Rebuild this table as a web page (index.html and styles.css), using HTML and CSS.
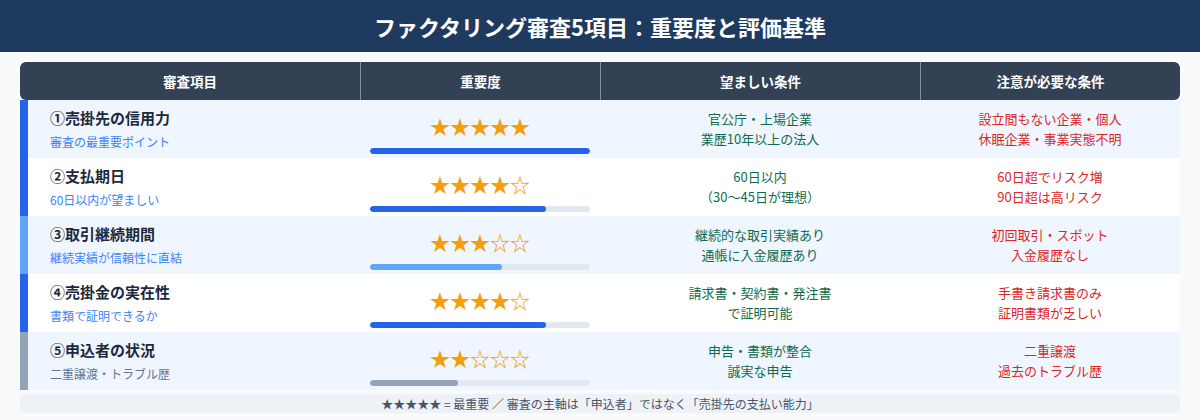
FILE: index.html
```html
<!DOCTYPE html>
<html lang="ja">
<head>
<meta charset="utf-8">
<link rel="stylesheet" href="styles.css">
</head>
<body>
<header class="titlebar"><h1>ファクタリング審査5項目：重要度と評価基準</h1></header>
<main class="wrap">
  <div class="thead">
    <div class="th">審査項目</div>
    <div class="th">重要度</div>
    <div class="th">望ましい条件</div>
    <div class="th">注意が必要な条件</div>
  </div>

  <div class="row alt">
    <div class="item bar-strong"><div class="name">①売掛先の信用力</div><div class="sub">審査の最重要ポイント</div></div>
    <div class="rank"><div class="stars">★★★★★</div><div class="track"><div class="fill strong" style="width:100%"></div></div></div>
    <div class="good">官公庁・上場企業<br>業歴10年以上の法人</div>
    <div class="bad">設立間もない企業・個人<br>休眠企業・事業実態不明</div>
  </div>

  <div class="row">
    <div class="item bar-strong"><div class="name">②支払期日</div><div class="sub">60日以内が望ましい</div></div>
    <div class="rank"><div class="stars">★★★★☆</div><div class="track"><div class="fill strong" style="width:80%"></div></div></div>
    <div class="good">60日以内<br>（30〜45日が理想）</div>
    <div class="bad">60日超でリスク増<br>90日超は高リスク</div>
  </div>

  <div class="row alt">
    <div class="item bar-mid"><div class="name">③取引継続期間</div><div class="sub">継続実績が信頼性に直結</div></div>
    <div class="rank"><div class="stars">★★★☆☆</div><div class="track"><div class="fill mid" style="width:60%"></div></div></div>
    <div class="good">継続的な取引実績あり<br>通帳に入金履歴あり</div>
    <div class="bad">初回取引・スポット<br>入金履歴なし</div>
  </div>

  <div class="row">
    <div class="item bar-strong"><div class="name">④売掛金の実在性</div><div class="sub">書類で証明できるか</div></div>
    <div class="rank"><div class="stars">★★★★☆</div><div class="track"><div class="fill strong" style="width:80%"></div></div></div>
    <div class="good">請求書・契約書・発注書<br>で証明可能</div>
    <div class="bad">手書き請求書のみ<br>証明書類が乏しい</div>
  </div>

  <div class="row alt">
    <div class="item bar-low"><div class="name">⑤申込者の状況</div><div class="sub gray">二重譲渡・トラブル歴</div></div>
    <div class="rank"><div class="stars">★★☆☆☆</div><div class="track"><div class="fill low" style="width:40%"></div></div></div>
    <div class="good">申告・書類が整合<br>誠実な申告</div>
    <div class="bad">二重譲渡<br>過去のトラブル歴</div>
  </div>

  <div class="note">★★★★★ = 最重要 ／ 審査の主軸は「申込者」ではなく「売掛先の支払い能力」</div>
</main>
</body>
</html>
```

FILE: styles.css
```css
* { box-sizing: border-box; }
html, body { margin: 0; padding: 0; }
body {
  width: 1200px;
  height: 420px;
  overflow: hidden;
  background: #f8fafc;
  font-family: "Noto Sans CJK JP", "Noto Sans", sans-serif;
  color: #1e293b;
}
.titlebar {
  height: 52px;
  background: #1e3a5f;
  display: flex;
  align-items: center;
  justify-content: center;
}
.titlebar h1 {
  margin: 0;
  color: #ffffff;
  font-size: 22px;
  font-weight: 700;
  line-height: 1;
}
.wrap {
  padding: 10px 20px 0;
}
.thead, .row {
  display: grid;
  grid-template-columns: 340px 240px 320px 260px;
}
.thead {
  height: 38px;
  background: #334155;
  border-radius: 6px;
}
.th {
  display: flex;
  align-items: center;
  justify-content: center;
  color: #ffffff;
  font-size: 13.5px;
  font-weight: 700;
}
.th + .th {
  border-left: 1.5px solid #8290a3;
}
.row {
  height: 58px;
  background: #ffffff;
}
.row.alt {
  background: #eff6ff;
}
.item {
  display: flex;
  flex-direction: column;
  justify-content: center;
  padding-left: 22px;
  border-left: 8px solid #2563eb;
}
.item.bar-mid { border-left-color: #60a5fa; }
.item.bar-low { border-left-color: #94a3b8; }
.name {
  font-size: 15px;
  font-weight: 700;
  line-height: 22px;
  color: #1e293b;
}
.sub {
  margin-top: 4px;
  font-size: 12px;
  line-height: 18px;
  color: #3b82f6;
}
.sub.gray { color: #64748b; }
.rank {
  padding: 12px 10px 0;
}
.stars {
  text-align: center;
  font-size: 20px;
  line-height: 30px;
  height: 30px;
  color: #f59e0b;
}
.track {
  margin-top: 6px;
  height: 6px;
  border-radius: 3px;
  background: #e2e8f0;
  overflow: hidden;
}
.fill {
  height: 100%;
  border-radius: 3px;
}
.fill.strong { background: #2563eb; }
.fill.mid { background: #60a5fa; }
.fill.low { background: #94a3b8; }
.good, .bad {
  display: flex;
  align-items: center;
  justify-content: center;
  text-align: center;
  font-size: 13px;
  line-height: 20px;
}
.good { color: #0f6b4e; }
.bad { color: #dc2626; }
.note {
  margin-top: 4px;
  height: 19px;
  line-height: 19px;
  border-radius: 6px;
  background: #eef2f6;
  text-align: center;
  font-size: 12px;
  color: #475569;
}
```
